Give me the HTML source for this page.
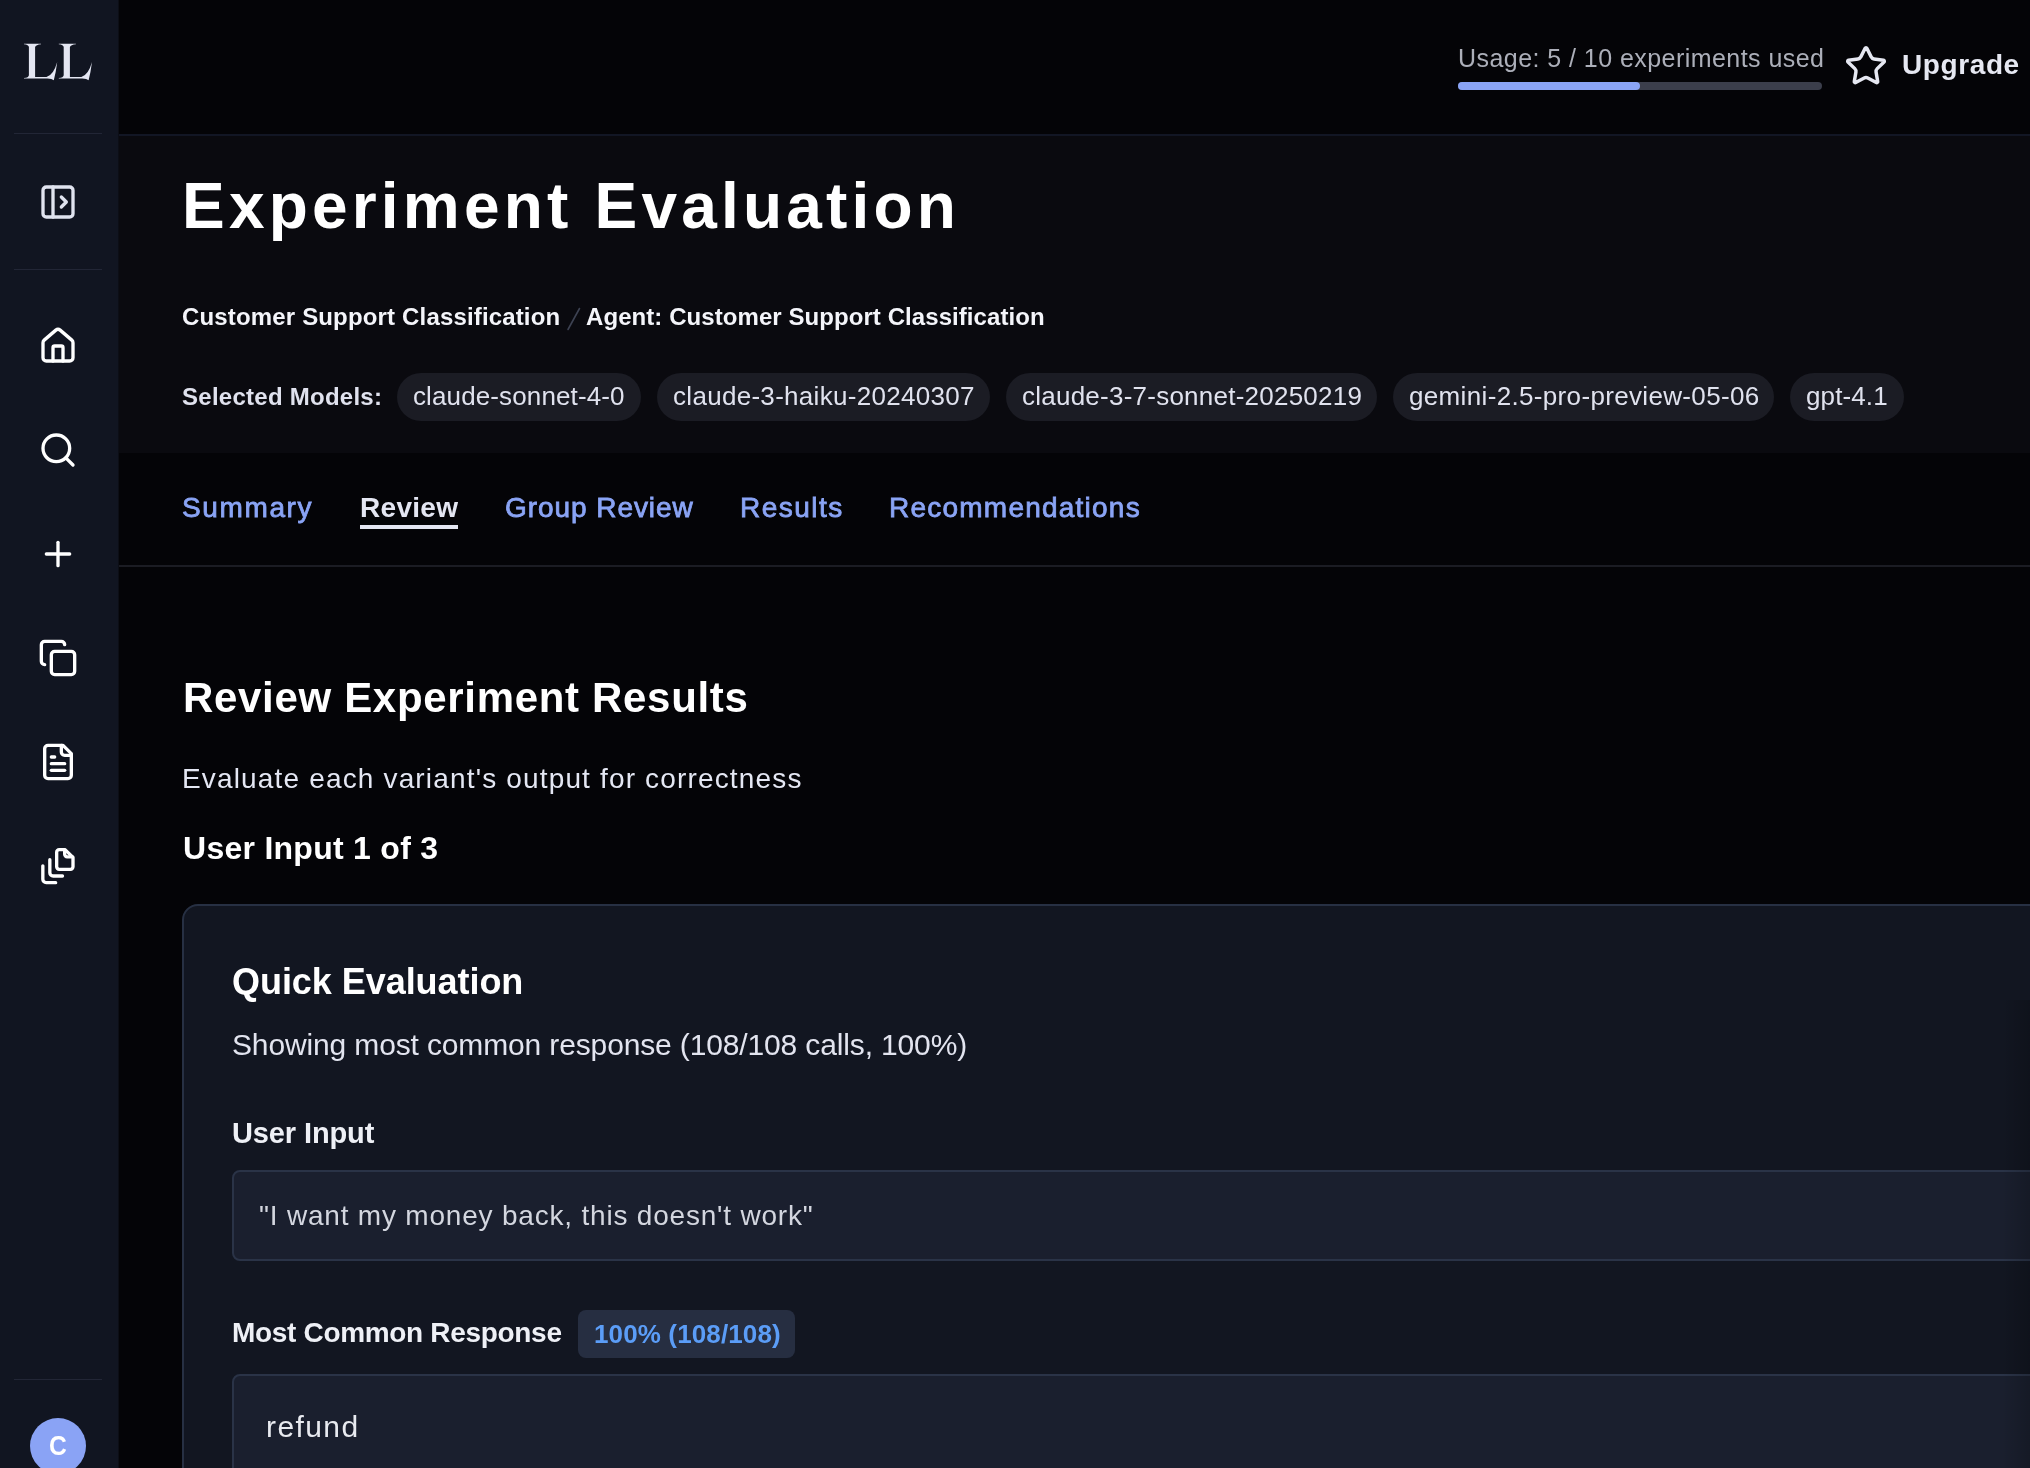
<!DOCTYPE html>
<html>
<head>
<meta charset="utf-8">
<style>
*{margin:0;padding:0;box-sizing:border-box}
html,body{width:2030px;height:1468px;overflow:hidden;background:#040407;font-family:"Liberation Sans",sans-serif;color:#fff}
body{will-change:transform}
.a{position:absolute;white-space:pre;line-height:1}
#sidebar{position:absolute;left:0;top:0;width:119px;height:1468px;background:#111521;border-right:1px solid #0c0e16}
.div{position:absolute;left:14px;width:88px;height:1px;background:#222636}
.ico{position:absolute;left:38px;width:40px;height:40px}
.ico svg{width:40px;height:40px;display:block}
#header{position:absolute;left:119px;top:0;width:1911px;height:136px;background:#040407;border-bottom:2px solid #121624}
#band{position:absolute;left:119px;top:136px;width:1911px;height:317px;background:#0a0a0f}
#tabs{position:absolute;left:119px;top:453px;width:1911px;height:114px;background:#040407;border-bottom:2px solid #1b1c23}
.ct{font-size:26px;color:#e0e2ee;letter-spacing:0.12px;top:383px}
.chip{position:absolute;top:373px;height:48px;border-radius:24px;background:#1b1c24}
.tab{color:#8aa4f5;font-size:28px;font-weight:400;top:494px;letter-spacing:0.3px;-webkit-text-stroke:0.8px #8aa4f5}
#card{position:absolute;left:182px;top:904px;width:1900px;height:700px;background:#121621;border:2px solid #273043;border-radius:16px}
.box{position:absolute;left:232px;width:1850px;background:#1a1f2e;border:2px solid #2a3347;border-radius:8px}
</style>
</head>
<body>
<div id="sidebar">
  <svg style="position:absolute;left:20px;top:40px" width="80" height="44" viewBox="-4 -3.8 80 44"><g fill="#e4e6f2"><path id="Lg" d="M0 0 H17.1 V0.5 Q12 0.9 11.1 3.2 V33.1 H22.5 Q29.5 31.4 33.2 18.2 L33 19.5 Q31.8 29.5 29.8 36.4 Q28 34.9 23.5 34.8 H0 V34.3 Q4.6 33.9 4.9 31.5 V3.2 Q4.6 0.9 0 0.5 Z"/><use href="#Lg" x="34.8"/></g></svg>
  <div class="div" style="top:133px"></div>
  <div class="ico" style="top:182px"><svg viewBox="0 0 24 24" fill="none" stroke="#e0e3ef" stroke-width="2" stroke-linecap="round" stroke-linejoin="round"><rect x="3" y="3" width="18" height="18" rx="2"/><path d="M9 3v18"/><path d="m14 9 3 3-3 3"/></svg></div>
  <div class="div" style="top:269px"></div>
  <div class="ico" style="top:326px"><svg viewBox="0 0 24 24" fill="none" stroke="#fff" stroke-width="2" stroke-linecap="round" stroke-linejoin="round"><path d="M15 21v-8a1 1 0 0 0-1-1h-4a1 1 0 0 0-1 1v8"/><path d="M3 10a2 2 0 0 1 .709-1.528l7-5.999a2 2 0 0 1 2.582 0l7 5.999A2 2 0 0 1 21 10v9a2 2 0 0 1-2 2H5a2 2 0 0 1-2-2z"/></svg></div>
  <div class="ico" style="top:430px"><svg viewBox="0 0 24 24" fill="none" stroke="#fff" stroke-width="2" stroke-linecap="round" stroke-linejoin="round"><circle cx="11" cy="11" r="8"/><path d="m21 21-4.3-4.3"/></svg></div>
  <div class="ico" style="top:534px"><svg viewBox="0 0 24 24" fill="none" stroke="#fff" stroke-width="2" stroke-linecap="round" stroke-linejoin="round"><path d="M5 12h14"/><path d="M12 5v14"/></svg></div>
  <div class="ico" style="top:638px"><svg viewBox="0 0 24 24" fill="none" stroke="#fff" stroke-width="2" stroke-linecap="round" stroke-linejoin="round"><rect width="14" height="14" x="8" y="8" rx="2" ry="2"/><path d="M4 16c-1.1 0-2-.9-2-2V4c0-1.1.9-2 2-2h10c1.1 0 2 .9 2 2"/></svg></div>
  <div class="ico" style="top:742px"><svg viewBox="0 0 24 24" fill="none" stroke="#fff" stroke-width="2" stroke-linecap="round" stroke-linejoin="round"><path d="M15 2H6a2 2 0 0 0-2 2v16a2 2 0 0 0 2 2h12a2 2 0 0 0 2-2V7Z"/><path d="M14 2v4a2 2 0 0 0 2 2h4"/><path d="M10 9H8"/><path d="M16 13H8"/><path d="M16 17H8"/></svg></div>
  <div class="ico" style="top:846px"><svg viewBox="0 0 24 24" fill="none" stroke="#fff" stroke-width="2" stroke-linecap="round" stroke-linejoin="round"><path d="M16.2 2.2h-3.5a1.5 1.5 0 0 0-1.5 1.5v8.8a1.5 1.5 0 0 0 1.5 1.5h6.8a1.5 1.5 0 0 0 1.5-1.5V6.9Z"/><path d="M16 2.4v2.6a1.5 1.5 0 0 0 1.5 1.5h3.2"/><path d="M7.1 8.2v7.8a2 2 0 0 0 2 2h5.6"/><path d="M2.9 11.9v8.1a2 2 0 0 0 2 2h5.7"/></svg></div>
  <div class="div" style="top:1379px"></div>
  <div style="position:absolute;left:30px;top:1418px;width:56px;height:56px;border-radius:50%;background:#8aa3f5"></div>
  <div class="a" style="left:30px;width:56px;text-align:center;top:1432px;font-size:28px;font-weight:700;color:#fff;transform:scaleX(0.88)">C</div>
</div>

<div id="header">
  <div class="a" style="left:1339px;top:46px;font-size:25px;color:#acafb9;letter-spacing:0.45px">Usage: 5 / 10 experiments used</div>
  <div style="position:absolute;left:1339px;top:82px;width:364px;height:8px;border-radius:4px;background:#3b3e4b"></div>
  <div style="position:absolute;left:1339px;top:82px;width:182px;height:8px;border-radius:4px;background:#8aa4f5"></div>
  <svg style="position:absolute;left:1725px;top:44px" width="44" height="44" viewBox="0 0 24 24" fill="none" stroke="#e6e8f2" stroke-width="1.9" stroke-linecap="round" stroke-linejoin="round"><path d="M11.525 2.295a.53.53 0 0 1 .95 0l2.31 4.679a2.123 2.123 0 0 0 1.595 1.16l5.166.756a.53.53 0 0 1 .294.904l-3.736 3.638a2.123 2.123 0 0 0-.611 1.878l.882 5.14a.53.53 0 0 1-.771.56l-4.618-2.428a2.122 2.122 0 0 0-1.973 0L6.396 21.01a.53.53 0 0 1-.77-.56l.881-5.139a2.122 2.122 0 0 0-.611-1.879L2.16 9.795a.53.53 0 0 1 .294-.906l5.165-.755a2.122 2.122 0 0 0 1.597-1.16z"/></svg>
  <div class="a" style="left:1783px;top:51px;font-size:28px;font-weight:700;color:#e6e8f2;letter-spacing:0.6px">Upgrade</div>
</div>

<div id="band">
  <div class="a" style="left:63px;top:38px;font-size:64px;font-weight:700;letter-spacing:4.2px;color:#fff">Experiment Evaluation</div>
</div>
<div class="a" style="left:182px;top:305px;font-size:24px;font-weight:700;color:#f4f5fa;letter-spacing:0.16px">Customer Support Classification</div>
<svg style="position:absolute;left:560px;top:300px" width="30" height="40"><path d="M19.5 8.5 L8 29.5" stroke="#3d4252" stroke-width="1.6" stroke-linecap="round"/></svg>
<div class="a" style="left:586px;top:305px;font-size:24px;font-weight:700;color:#f4f5fa;letter-spacing:0.07px">Agent: Customer Support Classification</div>
<div class="a" style="left:182px;top:385px;font-size:24px;font-weight:700;color:#e0e2ee;letter-spacing:0.26px">Selected Models:</div>
<div class="chip" style="left:397px;width:244px"></div>
<div class="chip" style="left:657px;width:333px"></div>
<div class="chip" style="left:1006px;width:371px"></div>
<div class="chip" style="left:1393px;width:381px"></div>
<div class="chip" style="left:1790px;width:114px"></div>
<div class="a ct" style="left:413px">claude-sonnet-4-0</div>
<div class="a ct" style="left:673px;letter-spacing:0.3px">claude-3-haiku-20240307</div>
<div class="a ct" style="left:1022px;letter-spacing:0.24px">claude-3-7-sonnet-20250219</div>
<div class="a ct" style="left:1409px;letter-spacing:0.34px">gemini-2.5-pro-preview-05-06</div>
<div class="a ct" style="left:1806px">gpt-4.1</div>

<div id="tabs"></div>
<div class="a tab" style="left:182px;letter-spacing:1.63px">Summary</div>
<div class="a tab" style="left:360px;color:#e4e6f2;font-weight:700;-webkit-text-stroke:0">Review</div>
<div style="position:absolute;left:360px;top:525px;width:98px;height:4px;background:#e4e6f2"></div>
<div class="a tab" style="left:505px;letter-spacing:0.94px">Group Review</div>
<div class="a tab" style="left:740px;letter-spacing:1.47px">Results</div>
<div class="a tab" style="left:889px;letter-spacing:1.23px">Recommendations</div>

<div class="a" style="left:183px;top:677px;font-size:42px;font-weight:700;letter-spacing:0.68px">Review Experiment Results</div>
<div class="a" style="left:182px;top:765px;font-size:28px;color:#e4e7f3;letter-spacing:1.16px">Evaluate each variant's output for correctness</div>
<div class="a" style="left:183px;top:832px;font-size:32px;font-weight:700;letter-spacing:0.27px">User Input 1 of 3</div>

<div id="card"></div>
<div class="a" style="left:232px;top:964px;font-size:36px;font-weight:700;letter-spacing:-0.05px">Quick Evaluation</div>
<div class="a" style="left:232px;top:1030px;font-size:30px;color:#e2e4ef;letter-spacing:-0.14px">Showing most common response (108/108 calls, 100%)</div>
<div class="a" style="left:232px;top:1119px;font-size:29px;font-weight:700;color:#eef0f6;letter-spacing:-0.12px">User Input</div>
<div class="box" style="top:1170px;height:91px"></div>
<div class="a" style="left:259px;top:1202px;font-size:28px;color:#d3d6df;letter-spacing:0.8px">"I want my money back, this doesn't work"</div>
<div class="a" style="left:232px;top:1319px;font-size:28px;font-weight:700;color:#eef0f6;letter-spacing:-0.32px">Most Common Response</div>
<div style="position:absolute;left:578px;top:1310px;width:217px;height:48px;border-radius:8px;background:#262e41"></div>
<div class="a" style="left:594px;top:1321px;font-size:26px;font-weight:700;color:#5b9df7;letter-spacing:0.13px">100% (108/108)</div>
<div class="box" style="top:1374px;height:200px"></div>
<div class="a" style="left:266px;top:1412px;font-size:30px;color:#e8eaf0;letter-spacing:1.4px">refund</div>
<div style="position:absolute;left:2002px;top:1000px;width:28px;height:468px;background:linear-gradient(to right,rgba(0,0,0,0),rgba(0,0,0,0.18))"></div>
</body>
</html>
